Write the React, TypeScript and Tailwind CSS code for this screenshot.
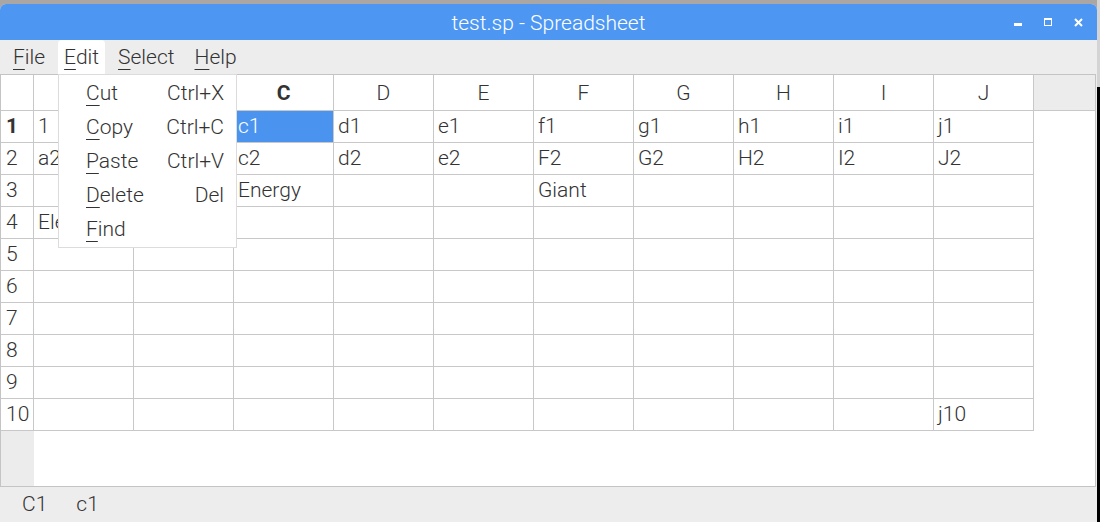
import React from 'react'

const cols = ['A', 'B', 'C', 'D', 'E', 'F', 'G', 'H', 'I', 'J']

const data: Record<string, string> = {
  A1: '1', B1: 'b1', C1: 'c1', D1: 'd1', E1: 'e1', F1: 'f1', G1: 'g1', H1: 'h1', I1: 'i1', J1: 'j1',
  A2: 'a2', B2: 'b2', C2: 'c2', D2: 'd2', E2: 'e2', F2: 'F2', G2: 'G2', H2: 'H2', I2: 'I2', J2: 'J2',
  C3: 'Energy', F3: 'Giant',
  A4: 'Electric',
  J10: 'j10',
}

const menuItems = [
  { key: 'C', rest: 'ut', shortcut: 'Ctrl+X' },
  { key: 'C', rest: 'opy', shortcut: 'Ctrl+C' },
  { key: 'P', rest: 'aste', shortcut: 'Ctrl+V' },
  { key: 'D', rest: 'elete', shortcut: 'Del' },
  { key: 'F', rest: 'ind', shortcut: '' },
]

function Mnemonic({ k, rest }: { k: string; rest: string }) {
  return (
    <span>
      <span className="underline decoration-1 underline-offset-[5px]">{k}</span>
      {rest}
    </span>
  )
}

export default function App() {
  return (
    <div className="w-[1100px] h-[522px] flex bg-[#a9a6a4] overflow-hidden font-['Roboto',sans-serif] font-light text-[#333333]">
      {/* window */}
      <div className="w-[1097px] mt-[4px] flex flex-col rounded-t-[6px] overflow-hidden bg-[#ededed]">
        {/* title bar */}
        <div className="h-[36px] shrink-0 bg-[#4d97f3] grid grid-cols-[1fr_auto_1fr] items-center">
          <div />
          <div className="text-white text-[21px] leading-none pt-[3px]">test.sp - Spreadsheet</div>
          <div className="flex justify-end items-center gap-[22px] pr-[14px]">
            <svg width="8" height="8" viewBox="0 0 8 8" className="text-white">
              <rect x="0" y="5" width="8" height="3" fill="currentColor" />
            </svg>
            <svg width="8" height="8" viewBox="0 0 8 8" className="text-white">
              <rect x="0.5" y="1" width="7" height="6.5" fill="none" stroke="currentColor" strokeWidth="1" />
              <rect x="0" y="0" width="8" height="2" fill="currentColor" />
            </svg>
            <svg width="9" height="9" viewBox="0 0 9 9" className="text-white">
              <path d="M1 1 L8 8 M8 1 L1 8" stroke="currentColor" strokeWidth="2" />
            </svg>
          </div>
        </div>

        {/* menu bar */}
        <div className="h-[34px] shrink-0 flex items-stretch pl-[7px] gap-[7px] text-[21px]">
          <div className="px-[6px] pt-[2px] flex items-center">
            <Mnemonic k="F" rest="ile" />
          </div>
          <div className="px-[6px] pt-[2px] flex items-center bg-white rounded-t-[4px]">
            <Mnemonic k="E" rest="dit" />
          </div>
          <div className="pl-[6px] pr-[7px] pt-[2px] flex items-center">
            <Mnemonic k="S" rest="elect" />
          </div>
          <div className="px-[6px] pt-[2px] flex items-center">
            <Mnemonic k="H" rest="elp" />
          </div>
        </div>

        {/* sheet */}
        <div className="relative flex-1 flex flex-col bg-white border border-[#c4c4c4] mr-[1px] text-[21px]">
          {/* header row */}
          <div className="h-[36px] flex border-b border-[#c8c8c8]">
            <div className="w-[33px] border-r border-[#c8c8c8]" />
            {cols.map((c) => (
              <div
                key={c}
                className={`w-[100px] border-r border-[#c8c8c8] flex items-center justify-center pt-[2px] ${c === 'C' ? 'font-bold' : ''}`}
              >
                {c}
              </div>
            ))}
            <div className="flex-1 bg-[#ececec]" />
          </div>

          {Array.from({ length: 10 }, (_, i) => i + 1).map((r) => (
            <div key={r} className="h-[32px] flex">
              <div
                className={`w-[33px] border-r border-b border-[#c8c8c8] flex items-center pl-[5px] pt-[1px] ${r === 1 ? 'font-bold' : ''}`}
              >
                {r}
              </div>
              {cols.map((c) => {
                const id = `${c}${r}`
                const selected = id === 'C1'
                return (
                  <div
                    key={id}
                    className={`w-[100px] border-r border-b border-[#c8c8c8] flex items-center px-[4px] pt-[1px] overflow-hidden whitespace-nowrap ${
                      selected ? 'bg-[#4a94f0] text-white' : ''
                    }`}
                  >
                    {data[id] ?? ''}
                  </div>
                )
              })}
            </div>
          ))}

          <div className="flex-1 flex">
            <div className="w-[33px] bg-[#ececec]" />
          </div>

          {/* Edit menu dropdown */}
          <div className="absolute left-[57px] top-[-1px] w-[179px] bg-white border border-[#dcdcdc] pt-[2px]">
            {menuItems.map((m) => (
              <div key={m.key + m.rest} className="h-[34px] flex items-center justify-between pl-[27px] pr-[12px]">
                <Mnemonic k={m.key} rest={m.rest} />
                <span>{m.shortcut}</span>
              </div>
            ))}
          </div>
        </div>

        {/* status bar */}
        <div className="h-[35px] shrink-0 flex items-center text-[21px] pl-[22px] gap-[29px]">
          <span>C1</span>
          <span>c1</span>
        </div>
      </div>

      {/* edge of screen */}
      <div className="w-[3px] flex flex-col">
        <div className="h-[87px] bg-[#d4d4d4]" />
        <div className="flex-1 bg-black" />
      </div>
    </div>
  )
}
